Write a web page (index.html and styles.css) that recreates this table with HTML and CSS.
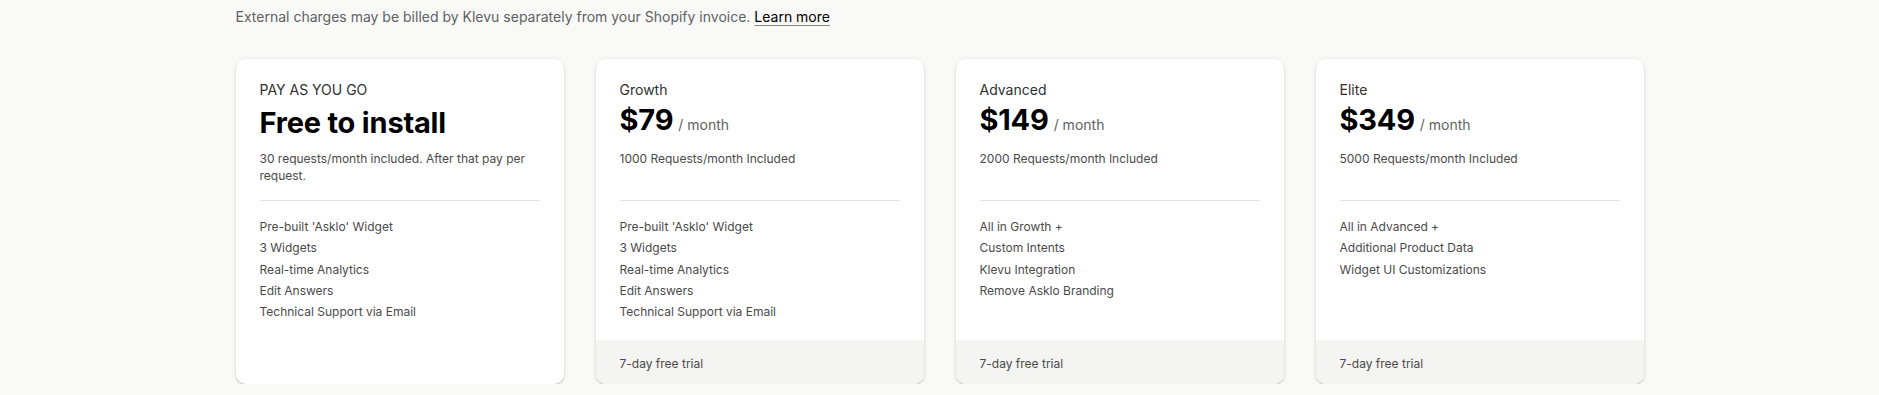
FILE: index.html
```html
<!DOCTYPE html>
<html lang="en">
<head>
  <meta charset="UTF-8">
  <meta name="viewport" content="width=device-width, initial-scale=1.0">
  <title>Plans</title>
  <link rel="stylesheet" href="styles.css">
</head>
<body>
  <div class="page">
    <p class="notice">External charges may be billed by Klevu separately from your Shopify invoice. <a href="#" class="notice-link">Learn more</a></p>

    <div class="plans">
      <div class="plan">
        <div class="plan-body">
          <div class="plan-name upper">PAY AS YOU GO</div>
          <div class="plan-price"><span class="price-amount">Free to install</span></div>
          <p class="plan-desc">30 requests/month included. After that pay per request.</p>
          <hr class="plan-divider">
          <ul class="plan-features">
            <li>Pre-built 'Asklo' Widget</li>
            <li>3 Widgets</li>
            <li>Real-time Analytics</li>
            <li>Edit Answers</li>
            <li>Technical Support via Email</li>
          </ul>
        </div>
      </div>

      <div class="plan">
        <div class="plan-body">
          <div class="plan-name">Growth</div>
          <div class="plan-price"><span class="price-amount">$79</span><span class="price-period">/ month</span></div>
          <p class="plan-desc">1000 Requests/month Included</p>
          <hr class="plan-divider">
          <ul class="plan-features">
            <li>Pre-built 'Asklo' Widget</li>
            <li>3 Widgets</li>
            <li>Real-time Analytics</li>
            <li>Edit Answers</li>
            <li>Technical Support via Email</li>
          </ul>
        </div>
        <div class="plan-footer">7-day free trial</div>
      </div>

      <div class="plan">
        <div class="plan-body">
          <div class="plan-name">Advanced</div>
          <div class="plan-price"><span class="price-amount">$149</span><span class="price-period">/ month</span></div>
          <p class="plan-desc">2000 Requests/month Included</p>
          <hr class="plan-divider">
          <ul class="plan-features">
            <li>All in Growth +</li>
            <li>Custom Intents</li>
            <li>Klevu Integration</li>
            <li>Remove Asklo Branding</li>
          </ul>
        </div>
        <div class="plan-footer">7-day free trial</div>
      </div>

      <div class="plan">
        <div class="plan-body">
          <div class="plan-name">Elite</div>
          <div class="plan-price"><span class="price-amount">$349</span><span class="price-period">/ month</span></div>
          <p class="plan-desc">5000 Requests/month Included</p>
          <hr class="plan-divider">
          <ul class="plan-features">
            <li>All in Advanced +</li>
            <li>Additional Product Data</li>
            <li>Widget UI Customizations</li>
          </ul>
        </div>
        <div class="plan-footer">7-day free trial</div>
      </div>
    </div>
  </div>
</body>
</html>
```

FILE: styles.css
```css
/* Base */
body {
  margin: 0;
  padding: 0;
  font-family: Inter, "Noto Sans", "Liberation Sans", sans-serif;
  background-color: #f9f9f8;
  color: #303030;
}

.page {
  max-width: 1408px;
  margin: 0 auto;
  padding-top: 7px;
}

/* Notice line */
.notice {
  margin: 0 0 32px;
  font-size: 14px;
  line-height: 20px;
  color: #616161;
}

.notice-link {
  color: #000;
  text-decoration: underline;
  text-decoration-color: #8a8a8a;
  text-underline-offset: 3px;
}

/* Plan grid */
.plans {
  display: grid;
  grid-template-columns: repeat(4, 1fr);
  gap: 32px;
}

.plan {
  display: flex;
  flex-direction: column;
  height: 325px;
  background-color: #fff;
  border-radius: 10px;
  overflow: hidden;
  box-shadow: 0 1px 2px rgba(0, 0, 0, 0.18), 0 1px 5px rgba(0, 0, 0, 0.08);
}

.plan-body {
  flex: 1;
  padding: 20px 24px 0;
}

.plan-name {
  font-size: 14px;
  line-height: 22px;
  color: #303030;
}

.plan-price {
  display: flex;
  align-items: baseline;
  gap: 5px;
  height: 36px;
  margin-top: 1px;
}

.price-amount {
  font-size: 29px;
  line-height: 36px;
  font-weight: 700;
  color: #000;
  letter-spacing: -0.2px;
}

.plan:first-child .price-amount {
  margin-top: 3px;
}

.price-period {
  font-size: 14px;
  color: #616161;
}

.plan-desc {
  margin: 12px 0 0;
  min-height: 34px;
  font-size: 12px;
  line-height: 17px;
  color: #4a4a4a;
}

.plan-divider {
  margin: 16px 0 15px;
  border: none;
  border-top: 1px solid #e3e3e3;
}

.plan-features {
  list-style: none;
  margin: 0;
  padding: 0;
  font-size: 12px;
  line-height: 21.33px;
  color: #4a4a4a;
}

.plan-footer {
  padding: 14px 24px 10px;
  font-size: 12px;
  line-height: 20px;
  color: #4a4a4a;
  background-color: #f4f4f2;
}
```
